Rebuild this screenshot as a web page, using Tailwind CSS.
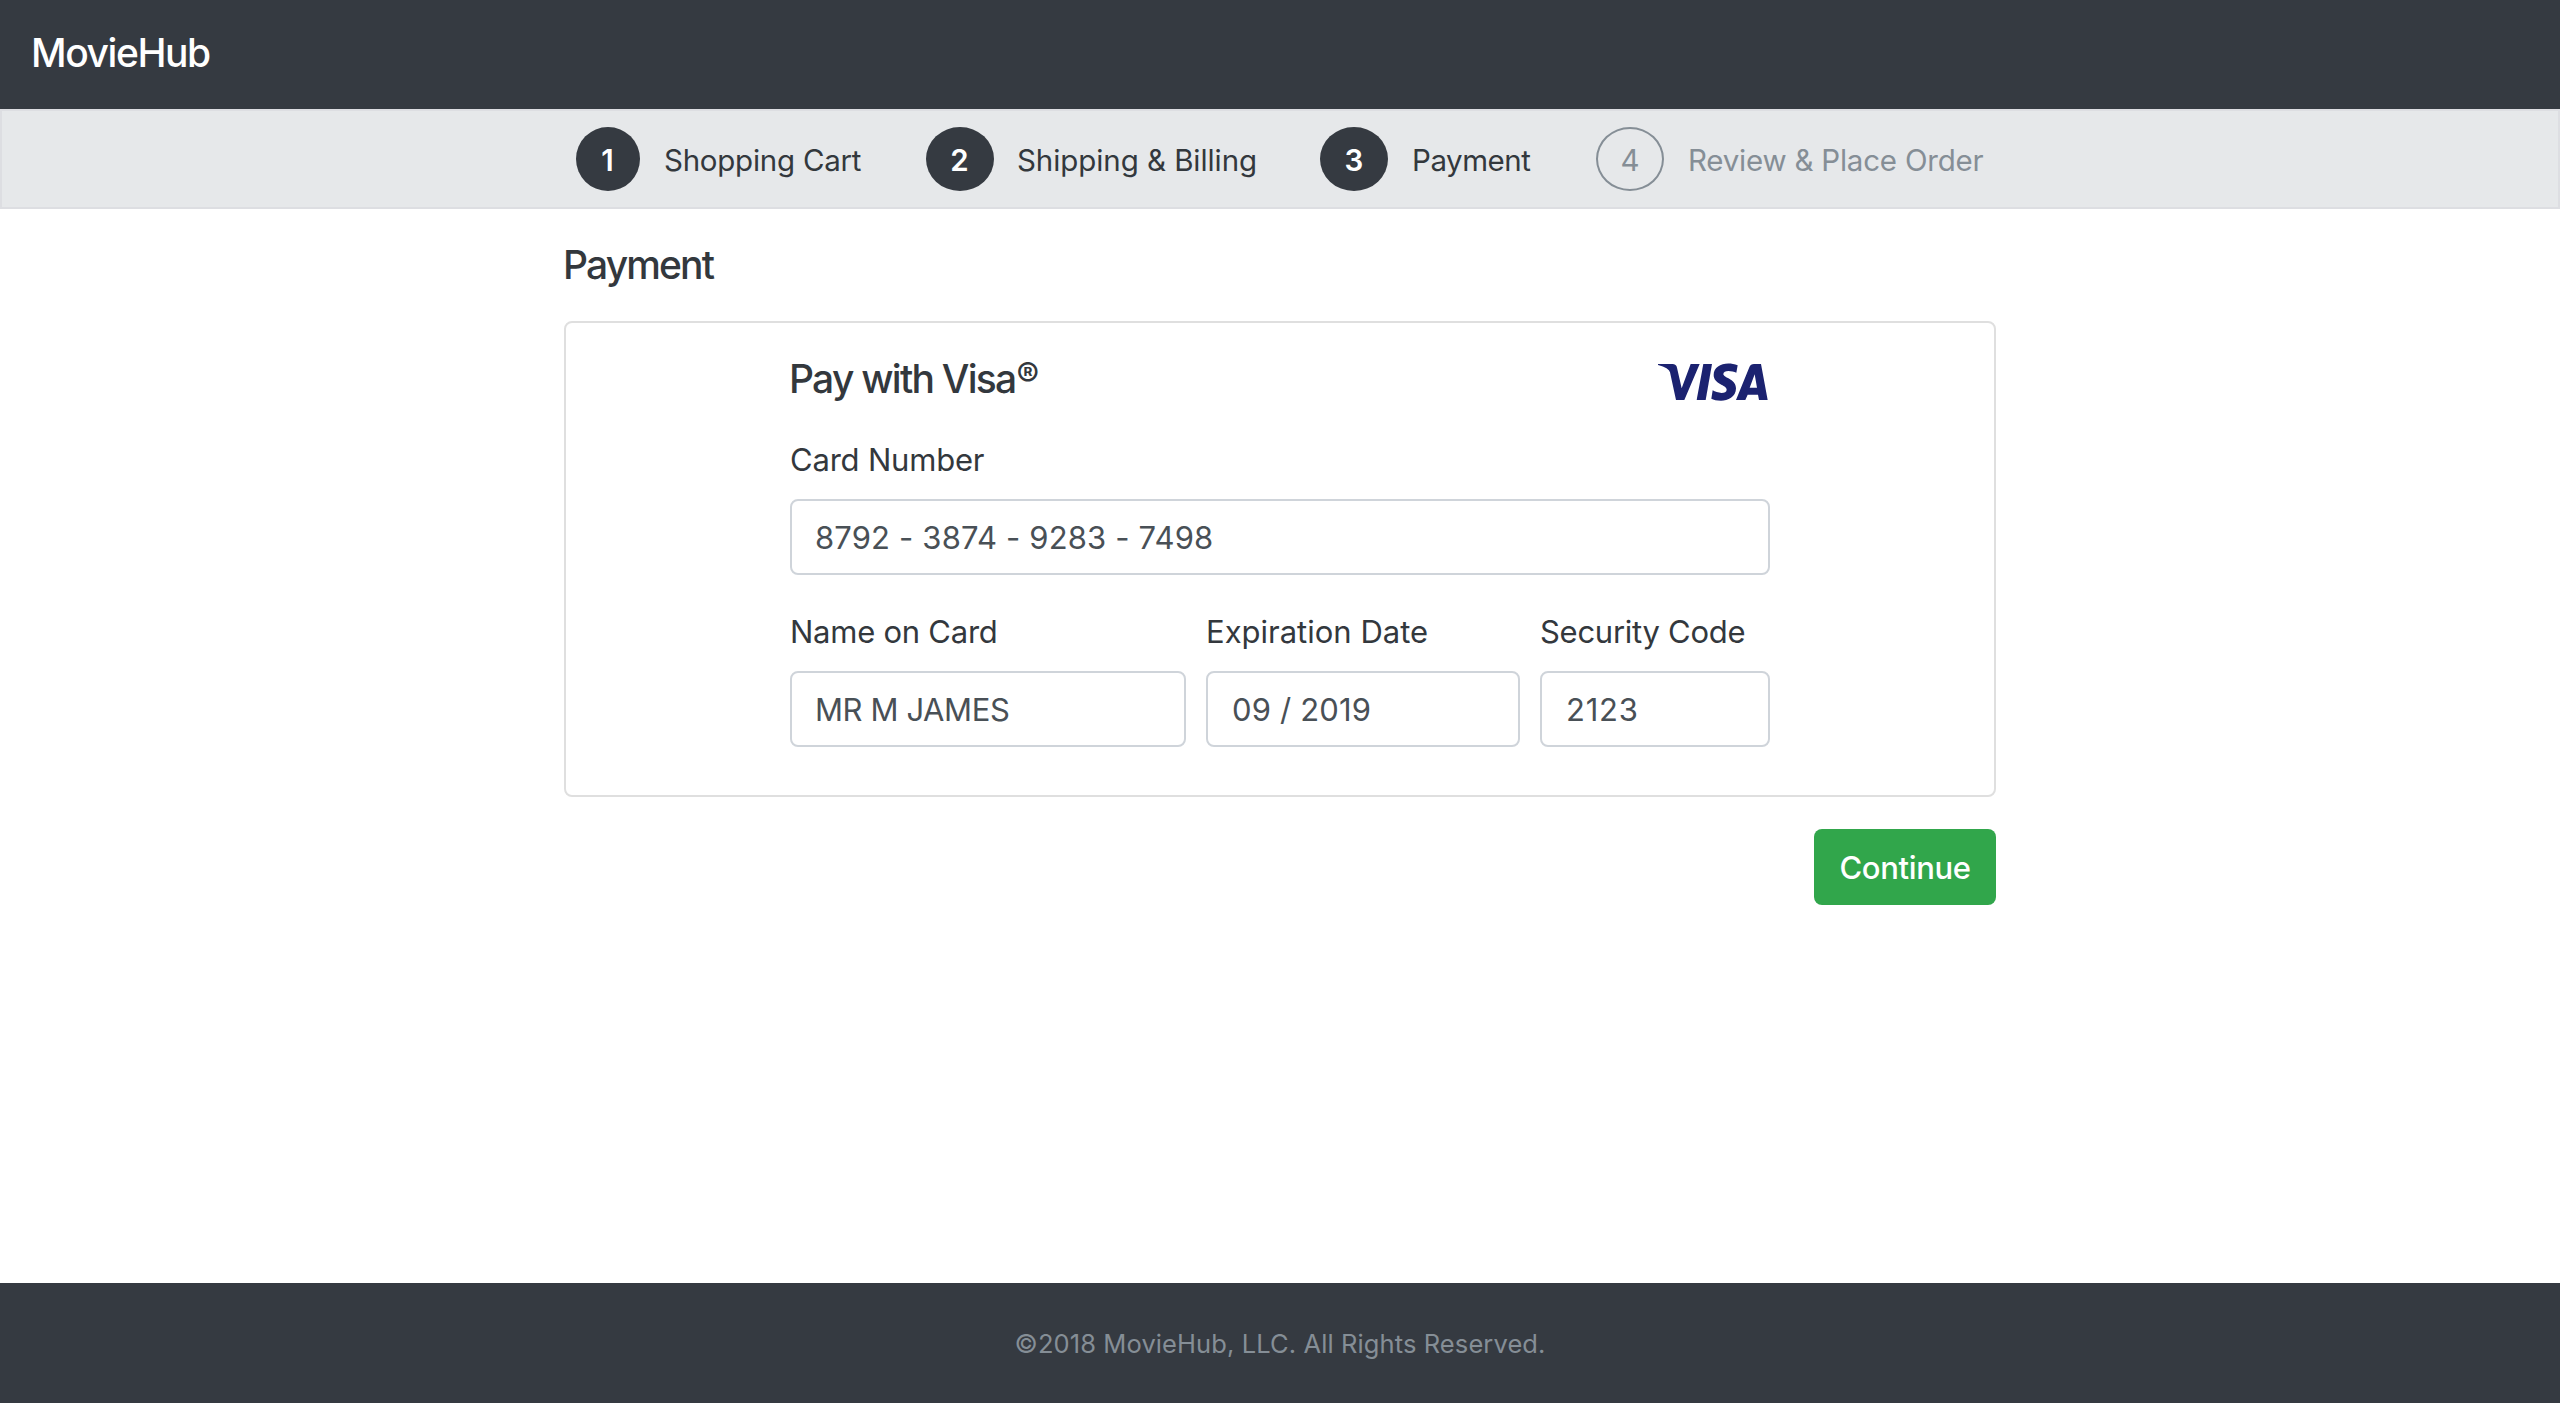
<!DOCTYPE html>
<html lang="en">
<head>
<meta charset="utf-8">
<title>MovieHub - Payment</title>
<script src="https://cdn.jsdelivr.net/npm/@tailwindcss/browser@4"></script>
</head>
<body class="flex h-[1403px] flex-col bg-white font-['Inter',sans-serif] text-[31px] leading-12 font-normal text-[#33383d]">
  <header class="flex h-[109px] shrink-0 items-center bg-[#353a41] pb-[3px] pl-[31px]">
    <a class="text-[39px] font-medium tracking-[-1.43px] text-white">MovieHub</a>
  </header>

  <nav class="h-[100px] shrink-0 border-2 border-[#dddee2] bg-[#e6e8ea] pl-[574px] pt-4 text-[29.5px]">
    <ol class="grid grid-cols-[350px_394px_276px_auto] whitespace-nowrap">
      <li class="flex items-center gap-6">
        <span class="flex h-16 w-16 items-center justify-center rounded-[50%] bg-[#353a41] pt-[2px] pr-[1px] font-semibold text-white">1</span>
        <span class="pt-[2px] tracking-[-0.25px]">Shopping Cart</span>
      </li>
      <li class="flex items-center gap-[23px]">
        <span class="flex h-16 w-[68px] items-center justify-center rounded-[50%] bg-[#353a41] pt-[2px] pr-[1px] font-semibold text-white">2</span>
        <span class="pt-[2px] tracking-[-0.07px]">Shipping &amp; Billing</span>
      </li>
      <li class="flex items-center gap-6">
        <span class="flex h-16 w-[68px] items-center justify-center rounded-[50%] bg-[#353a41] pt-[2px] font-semibold text-white">3</span>
        <span class="pt-[2px] tracking-[-0.45px]">Payment</span>
      </li>
      <li class="flex items-center gap-6 text-[#858e96]">
        <span class="flex h-16 w-[68px] items-center justify-center rounded-[50%] border-2 border-[#858e96] pt-[2px]">4</span>
        <span class="pt-[2px] tracking-[-0.22px]">Review &amp; Place Order</span>
      </li>
    </ol>
  </nav>

  <main class="mx-auto w-[1432px] grow pt-8">
    <h1 class="-ml-[1px] text-[39px] font-medium tracking-[-1.85px]">Payment</h1>
    <section class="mt-8 h-[476px] rounded-lg border-2 border-[#dfdfdf] px-56 pt-8">
      <div class="flex justify-between">
        <h2 class="-ml-[1px] h-12 text-[39px] font-medium tracking-[-1.75px]">Pay with Visa<sup class="top-[-6px] ml-[1px] align-baseline text-[34px] font-semibold tracking-normal">®</sup></h2>
        <svg class="mt-[8px] mr-[2px] h-[38px] w-[110px]" viewBox="54 39 330 114" fill="#1b2270" role="img" aria-label="Visa">
          <path d="M54 42H97Q109 42 111 53L125 115L152 42H179L133 150H108L90 67Q87 54 54 45Z"/>
          <path d="M190 42H216L197 150H170Z"/>
          <path d="M293 46L289 68C276 62 250 59 250 72C250 84 288 86 288 115C288 142 263 152 243 152C230 152 221 149 214 146L218 121C231 130 260 133 260 119C260 104 221 103 221 75C221 43 261 33 293 46Z"/>
          <path fill-rule="evenodd" d="M342 42H363L383 150H357L354 134H323L316 150H288L328 52Q332 42 342 42ZM344 73L329 113H351Z"/>
        </svg>
      </div>
      <label class="mt-8 block h-12 pt-px tracking-[-0.2px]" for="number">Card Number</label>
      <input id="number" class="mt-4 block h-[76px] w-full rounded-lg border-2 border-[#cfd4da] bg-white pl-[23px] tracking-[0.16px] text-[#495056]" value="8792 - 3874 - 9283 - 7498">
      <div class="mt-8 grid grid-cols-[396px_314px_230px] gap-5">
        <div>
          <label class="block h-12 pt-px tracking-[-0.25px]" for="name">Name on Card</label>
          <input id="name" class="mt-4 block h-[76px] w-full rounded-lg border-2 border-[#cfd4da] bg-white pl-[23px] tracking-[-0.4px] text-[#495056]" value="MR M JAMES">
        </div>
        <div>
          <label class="block h-12 pt-px" for="expiry">Expiration Date</label>
          <input id="expiry" class="mt-4 block h-[76px] w-full rounded-lg border-2 border-[#cfd4da] bg-white px-6 tracking-[0.16px] text-[#495056]" value="09 / 2019">
        </div>
        <div>
          <label class="block h-12 pt-px tracking-[-0.27px]" for="code">Security Code</label>
          <input id="code" class="mt-4 block h-[76px] w-full rounded-lg border-2 border-[#cfd4da] bg-white px-6 tracking-[0.8px] text-[#495056]" value="2123">
        </div>
      </div>
    </section>
    <div class="mt-8 flex justify-end">
      <button class="h-[76px] w-[182px] rounded-lg bg-[#31a64b] pt-px font-medium tracking-[-0.35px] text-white">Continue</button>
    </div>
  </main>

  <footer class="flex h-[120px] shrink-0 items-center justify-center bg-[#353a41] pt-[2px] text-[25.5px] tracking-[0.1px] text-[#858e96]">©2018 MovieHub, LLC. All Rights Reserved.</footer>
</body>
</html>
